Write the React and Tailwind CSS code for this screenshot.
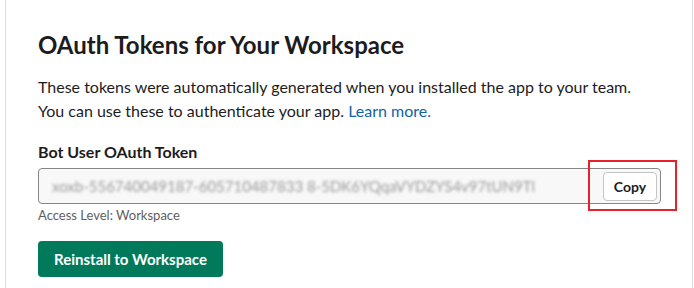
export default function App() {
  return (
    <div className="w-[694px] h-[288px] bg-white overflow-hidden" style={{ fontFamily: "Lato, 'Noto Sans', sans-serif" }}>
      <div className="ml-[5px] w-[688px] h-[288px] border-l border-r border-[#dddddd] pl-[32px] pt-[30px]">
        <h2 className="text-[24px] font-bold text-[#1d1c1d] leading-[30px]">OAuth Tokens for Your Workspace</h2>
        <p className="mt-[15px] text-[16px] leading-[24px] text-[#1d1c1d]">
          These tokens were automatically generated when you installed the app to your team.
          <br />
          You can use these to authenticate your app. <span className="text-[#1264a3]">Learn more.</span>
        </p>
        <div className="mt-[18px] text-[16px] font-bold leading-[22px] text-[#1d1c1d]">Bot User OAuth Token</div>
        <div className="mt-[5px] w-[623px] h-[36px] rounded-[4px] border border-[#868686] bg-[#f8f8f8] flex items-center pl-[13px] pr-[3px]">
          <div className="flex-1 overflow-hidden whitespace-nowrap text-[15px] text-[#9a9a9a] blur-[1.4px]">
            xoxb-556740049187-605710487833 8-5DK6YQqaVYDZYS4v97tUN9Tl
          </div>
          <div className="relative">
            <div className="absolute left-[-15px] top-[-12px] w-[89px] h-[51px] border-2 border-[#e8202a]" />
            <button className="relative w-[54px] h-[29px] rounded-[4px] border border-[#c4c4c4] bg-white text-[14px] font-bold text-[#1d1c1d]">
              Copy
            </button>
          </div>
        </div>
        <div className="mt-[2px] text-[13px] leading-[18px] text-[#616061]">Access Level: Workspace</div>
        <button className="mt-[17px] w-[185px] h-[36px] rounded-[4px] bg-[#007a5a] text-white text-[15px] font-bold">
          Reinstall to Workspace
        </button>
      </div>
    </div>
  );
}
